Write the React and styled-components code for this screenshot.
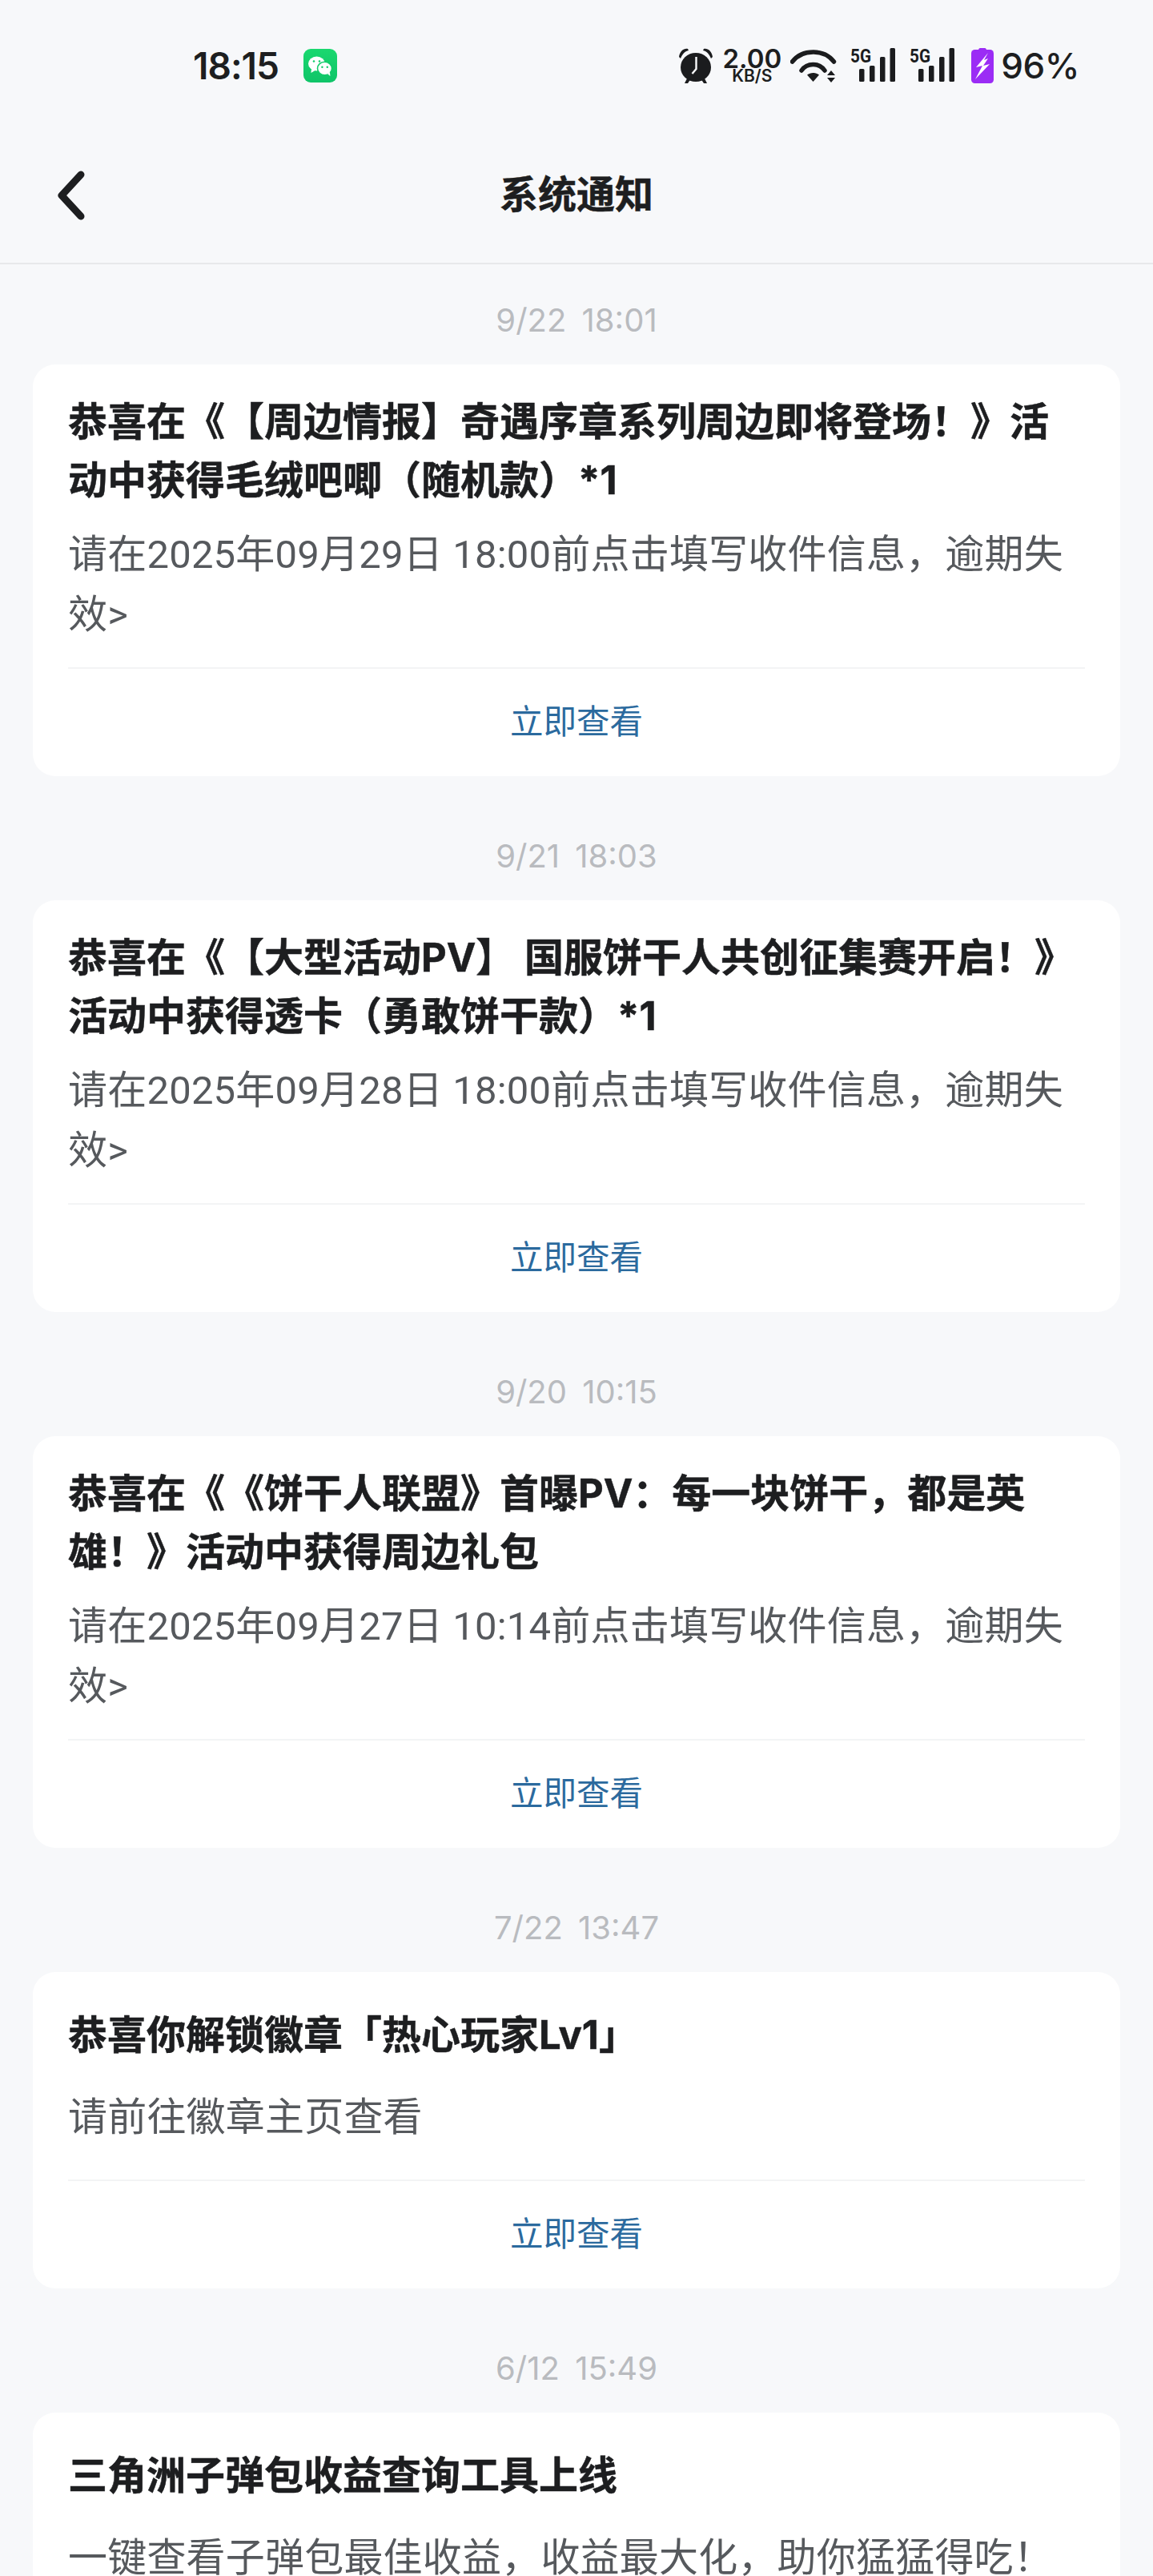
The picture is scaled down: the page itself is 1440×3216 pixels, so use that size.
import React from 'react'
import styled, { createGlobalStyle } from 'styled-components'

const GlobalStyle = createGlobalStyle`
  html, body {
    margin: 0;
    padding: 0;
    background: #f7f8fa;
  }
  body {
    font-family: Inter, "Noto Sans CJK SC", sans-serif;
    color: #1d1e20;
    text-spacing-trim: space-all;
  }
`

const Page = styled.div`
  width: 1440px;
  height: 3216px;
  overflow: hidden;
  background: #f7f8fa;
`

const StatusBar = styled.div`
  box-sizing: border-box;
  height: 164px;
  padding: 0 92px 0 241px;
  display: flex;
  align-items: center;
  justify-content: space-between;
`

const StatusLeft = styled.div`
  display: flex;
  align-items: center;
  gap: 31px;
`

const Time = styled.span`
  font-size: 46px;
  font-weight: 600;
  letter-spacing: -1px;
  line-height: 50px;
`

const StatusRight = styled.div`
  display: flex;
  align-items: center;
`

const NetSpeed = styled.div`
  width: 68px;
  margin: 0 14px 0 14px;
  display: flex;
  flex-direction: column;
  align-items: center;
  font-weight: 600;
`

const SpeedValue = styled.span`
  font-size: 33px;
  line-height: 26px;
`

const SpeedUnit = styled.span`
  font-size: 21px;
  line-height: 18px;
`

const Percent = styled.span`
  margin-left: 9px;
  font-size: 44px;
  font-weight: 500;
  letter-spacing: -0.5px;
  line-height: 50px;
`

const IconGap = styled.span`
  width: ${p => p.$size}px;
`

const NavBar = styled.header`
  box-sizing: border-box;
  height: 166px;
  padding-bottom: 6px;
  border-bottom: 2px solid #e8e9eb;
  position: relative;
  display: flex;
  align-items: center;
  justify-content: center;
`

const BackIcon = styled.svg`
  position: absolute;
  left: 71px;
  top: 49px;
`

const NavTitle = styled.h1`
  margin: 0;
  font-size: 48px;
  font-weight: 700;
  line-height: 60px;
  -webkit-text-stroke: 0.5px #1d1e20;
`

const List = styled.main`
  padding: 45px 41px 0;
  display: flex;
  flex-direction: column;
  gap: 75px;
`

const Item = styled.section`
  display: flex;
  flex-direction: column;
  gap: 30px;
`

const DateLabel = styled.div`
  text-align: center;
  font-size: 40px;
  line-height: 50px;
  word-spacing: 8px;
  color: #b9bbbf;
`

const Card = styled.article`
  padding: 0 44px;
  background: #fff;
  border-radius: 28px;
`

const Title = styled.h2`
  margin: 0;
  padding-top: ${p => (p.$single ? 42 : 35)}px;
  font-size: 49px;
  font-weight: 700;
  line-height: 73px;
  -webkit-text-stroke: 0.5px #1d1e20;
`

const Body = styled.p`
  margin: ${p => (p.$single ? 29 : 19)}px 0 ${p => (p.$single ? 40 : 28)}px;
  font-family: Roboto, "Noto Sans CJK SC", sans-serif;
  font-size: 49px;
  font-weight: 400;
  letter-spacing: 0.2px;
  line-height: 75px;
  color: #56595d;
`

const ActionRow = styled.div`
  box-sizing: border-box;
  height: 136px;
  padding-bottom: 2px;
  border-top: 2px solid #f3f4f5;
  display: flex;
  align-items: center;
  justify-content: center;
`

const ActionLink = styled.a`
  font-size: 41.5px;
  line-height: 48px;
  color: #2b6a9e;
`

const WeChatIcon = () => (
  <svg width="42" height="42" viewBox="0 0 42 42">
    <defs>
      <linearGradient id="wechat" x1="0" y1="0" x2="0" y2="1">
        <stop offset="0" stopColor="#1ad86f" />
        <stop offset="1" stopColor="#0fc468" />
      </linearGradient>
    </defs>
    <rect width="42" height="42" rx="9" fill="url(#wechat)" />
    <ellipse cx="16.5" cy="18.5" rx="10.5" ry="9" fill="#fff" />
    <path d="M10 25l-.6 5 6-3.600z" fill="#fff" />
    <ellipse cx="26.500" cy="24.500" rx="9" ry="8.300" fill="#fff" stroke="#12cb6a" strokeWidth="1.600" />
    <path d="M30 31l3.400 3-.4-5z" fill="#fff" />
    <circle cx="13" cy="15.500" r="1.300" fill="#12cb6a" />
    <circle cx="20" cy="15.500" r="1.300" fill="#12cb6a" />
    <circle cx="23.400" cy="22.800" r="1.200" fill="#12cb6a" />
    <circle cx="29.800" cy="22.800" r="1.200" fill="#12cb6a" />
  </svg>
)

const AlarmIcon = () => (
  <svg width="44" height="44" viewBox="0 0 44 44">
    <ellipse cx="22" cy="24" rx="19" ry="18" fill="#1b1c1e" />
    <path d="M1 11C2 4 7 0 12 1l1 2C8 4 5 8 3 13z" fill="#1b1c1e" />
    <path d="M43 11C42 4 37 0 32 1l-1 2c5 1 8 5 10 10z" fill="#1b1c1e" />
    <path d="M8 44l4-8 4 2-4 6z M36 44l-4-8-4 2 4 6z" fill="#1b1c1e" />
    <path d="M22.500 11v15l-5 6" fill="none" stroke="#f7f8fa" strokeWidth="2.400" />
  </svg>
)

const WifiIcon = () => (
  <svg width="58" height="44" viewBox="0 0 58 44">
    <path d="M2.500 17C15 1 42 1 54.500 17" fill="none" stroke="#1b1c1e" strokeWidth="5.500" strokeLinecap="round" />
    <path d="M14 28C21 18 36 18 43 28" fill="none" stroke="#1b1c1e" strokeWidth="5.500" strokeLinecap="round" />
    <path d="M21 33.500C25 30 32 30 36 33.500L28.500 42z" fill="#1b1c1e" />
    <path d="M46 34L51 28l5 6z M46 37h10l-5 6z" fill="#1b1c1e" />
  </svg>
)

const SignalSvg = styled.svg`
  overflow: visible;
`

const SignalIcon = () => (
  <SignalSvg width="56" height="44" viewBox="0 0 56 44">
    <text x="0" y="17.500" fontFamily="Roboto, sans-serif" fontSize="23" fontWeight="700" textLength="26" lengthAdjust="spacingAndGlyphs" fill="#1b1c1e">5G</text>
    <rect x="11" y="26" width="6.500" height="16" rx="1.500" fill="#1b1c1e" />
    <rect x="24" y="22" width="6.500" height="20" rx="1.500" fill="#1b1c1e" />
    <rect x="37" y="11" width="6.500" height="31" rx="1.500" fill="#1b1c1e" />
    <rect x="49.500" y="0" width="6.500" height="42" rx="1.500" fill="#1b1c1e" />
  </SignalSvg>
)

const BatteryIcon = () => (
  <svg width="28" height="44" viewBox="0 0 28 44">
    <path d="M9 2.500C9 1 10 0 11 0h6c1 0 2 1 2 2.500z" fill="#9b2cf5" />
    <rect x="0" y="2" width="28" height="42" rx="4.500" fill="#9b2cf5" />
    <path d="M21 6L6 24l8-2L5 39 23 20l-8 2 6-9-5 2z" fill="#fff" />
  </svg>
)

const notices = [
  {
    date: '9/22 18:01',
    title: ['恭喜在《【周边情报】奇遇序章系列周边即将登场！》活', '动中获得毛绒吧唧（随机款）*1'],
    body: ['请在2025年09月29日 18:00前点击填写收件信息，逾期失', '效>'],
  },
  {
    date: '9/21 18:03',
    title: ['恭喜在《【大型活动PV】 国服饼干人共创征集赛开启！》', '活动中获得透卡（勇敢饼干款）*1'],
    body: ['请在2025年09月28日 18:00前点击填写收件信息，逾期失', '效>'],
  },
  {
    date: '9/20 10:15',
    title: ['恭喜在《《饼干人联盟》首曝PV：每一块饼干，都是英', '雄！》活动中获得周边礼包'],
    body: ['请在2025年09月27日 10:14前点击填写收件信息，逾期失', '效>'],
  },
  {
    date: '7/22 13:47',
    title: ['恭喜你解锁徽章「热心玩家Lv1」'],
    body: ['请前往徽章主页查看'],
  },
  {
    date: '6/12 15:49',
    title: ['三角洲子弹包收益查询工具上线'],
    body: ['一键查看子弹包最佳收益，收益最大化，助你猛猛得吃！'],
  },
]

const Lines = ({ lines }) =>
  lines.map((line, i) => (
    <React.Fragment key={i}>
      {i > 0 && <br />}
      {line}
    </React.Fragment>
  ))

export default function App() {
  return (
    <Page>
      <GlobalStyle />
      <StatusBar>
        <StatusLeft>
          <Time>18:15</Time>
          <WeChatIcon />
        </StatusLeft>
        <StatusRight>
          <AlarmIcon />
          <NetSpeed>
            <SpeedValue>2.00</SpeedValue>
            <SpeedUnit>KB/S</SpeedUnit>
          </NetSpeed>
          <WifiIcon />
          <IconGap $size={17} />
          <SignalIcon />
          <IconGap $size={18} />
          <SignalIcon />
          <IconGap $size={21} />
          <BatteryIcon />
          <Percent>96%</Percent>
        </StatusRight>
      </StatusBar>
      <NavBar>
        <BackIcon width="36" height="62" viewBox="0 0 36 62">
          <path d="M30 5L6 31l24 26" fill="none" stroke="#1d1e20" strokeWidth="9" strokeLinecap="round" strokeLinejoin="round" />
        </BackIcon>
        <NavTitle>系统通知</NavTitle>
      </NavBar>
      <List>
        {notices.map(n => {
          const single = n.title.length === 1
          return (
            <Item key={n.date}>
              <DateLabel>{n.date}</DateLabel>
              <Card>
                <Title $single={single}><Lines lines={n.title} /></Title>
                <Body $single={single}><Lines lines={n.body} /></Body>
                <ActionRow>
                  <ActionLink>立即查看</ActionLink>
                </ActionRow>
              </Card>
            </Item>
          )
        })}
      </List>
    </Page>
  )
}
